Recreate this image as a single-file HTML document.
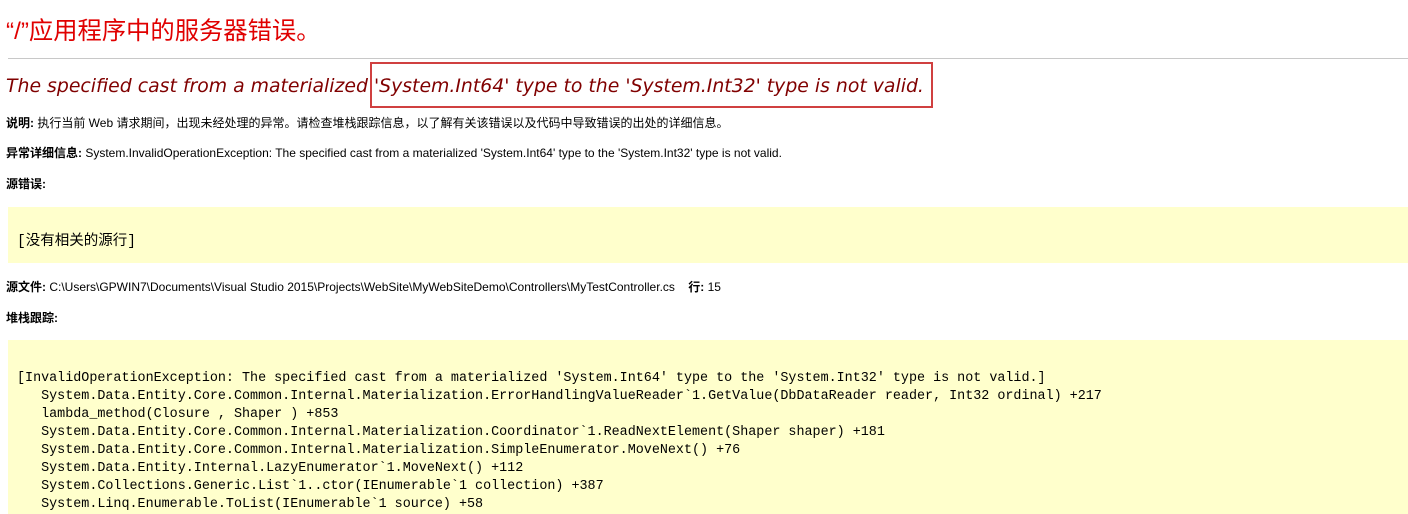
<!DOCTYPE html>
<html><head><meta charset="utf-8"><style>
body{margin:0;background:#fff;width:1408px;height:514px;overflow:hidden;position:relative;font-family:"Liberation Sans","Noto Sans CJK SC",sans-serif;}
.a{position:absolute;white-space:pre;}
h1{position:absolute;left:6px;top:14px;margin:0;font-size:24.3px;font-weight:normal;color:#e00000;font-family:"Liberation Sans","Noto Sans CJK SC",sans-serif;line-height:36px;}
.hr{position:absolute;left:8px;top:58px;width:1400px;height:1px;background:#c8c8c8;}
h2{position:absolute;left:6px;top:72px;margin:0;font-size:18.85px;font-weight:normal;font-style:italic;color:#800000;font-family:"DejaVu Sans",sans-serif;line-height:30px;white-space:pre;}
.box{position:absolute;left:370px;top:62px;width:559px;height:42px;border:2px solid #d04040;}
.t{font-size:12px;color:#000;line-height:16px;}
.t b{font-weight:bold;}
.y{position:absolute;left:8px;width:1400px;background:#ffffcc;}
.m{font-family:"Liberation Mono",monospace;font-size:13.4px;letter-spacing:0;line-height:18px;color:#000;}
</style></head><body>
<h1>“/”应用程序中的服务器错误。</h1>
<div class="hr"></div>
<h2>The specified cast from a materialized 'System.Int64' type to the 'System.Int32' type is not valid.</h2>
<div class="box"></div>
<div class="a t" style="left:6px;top:115px"><b>说明:</b> 执行当前 Web 请求期间，出现未经处理的异常。请检查堆栈跟踪信息，以了解有关该错误以及代码中导致错误的出处的详细信息。</div>
<div class="a t" style="left:6px;top:145px"><b>异常详细信息:</b> System.InvalidOperationException: The specified cast from a materialized 'System.Int64' type to the 'System.Int32' type is not valid.</div>
<div class="a t" style="left:6px;top:176px"><b>源错误:</b></div>
<div class="y" style="top:207px;height:56px"></div>
<div class="a" style="left:17px;top:232px;font-size:14.5px;line-height:20px;font-family:'Liberation Mono','Noto Sans CJK SC',monospace">[没有相关的源行]</div>
<div class="a t" style="left:6px;top:279px"><b>源文件:</b> C:\Users\GPWIN7\Documents\Visual Studio 2015\Projects\WebSite\MyWebSiteDemo\Controllers\MyTestController.cs    <b>行:</b> 15</div>
<div class="a t" style="left:6px;top:310px"><b>堆栈跟踪:</b></div>
<div class="y" style="top:340px;height:174px"></div>
<div class="a m" style="left:17px;top:370px">[InvalidOperationException: The specified cast from a materialized 'System.Int64' type to the 'System.Int32' type is not valid.]
   System.Data.Entity.Core.Common.Internal.Materialization.ErrorHandlingValueReader`1.GetValue(DbDataReader reader, Int32 ordinal) +217
   lambda_method(Closure , Shaper ) +853
   System.Data.Entity.Core.Common.Internal.Materialization.Coordinator`1.ReadNextElement(Shaper shaper) +181
   System.Data.Entity.Core.Common.Internal.Materialization.SimpleEnumerator.MoveNext() +76
   System.Data.Entity.Internal.LazyEnumerator`1.MoveNext() +112
   System.Collections.Generic.List`1..ctor(IEnumerable`1 collection) +387
   System.Linq.Enumerable.ToList(IEnumerable`1 source) +58</div>
</body></html>
